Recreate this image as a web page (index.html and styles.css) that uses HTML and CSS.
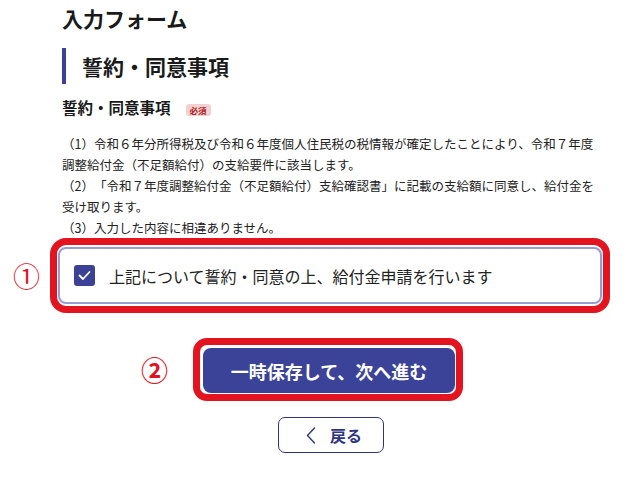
FILE: index.html
```html
<!DOCTYPE html>
<html lang="ja">
<head>
<meta charset="utf-8">
<title>入力フォーム</title>
<link rel="stylesheet" href="styles.css">
</head>
<body>
<div class="page">
  <h1 class="title">入力フォーム</h1>
  <h2 class="section">誓約・同意事項</h2>
  <div class="sub">
    <span class="sub-label">誓約・同意事項</span>
    <span class="badge">必須</span>
  </div>
  <div class="terms">
    <p>（1）令和６年分所得税及び令和６年度個人住民税の税情報が確定したことにより、令和７年度<br>調整給付金（不足額給付）の支給要件に該当します。</p>
    <p>（2）「令和７年度調整給付金（不足額給付）支給確認書」に記載の支給額に同意し、給付金を<br>受け取ります。</p>
    <p>（3）入力した内容に相違ありません。</p>
  </div>
  <div class="row row-check">
    <span class="marker marker-1">①</span>
    <div class="frame frame-check">
      <label class="check-box">
        <span class="check">
          <svg width="21" height="21" viewBox="0 0 21 21"><polyline points="5.5,10.5 9,14 15.5,7" fill="none" stroke="#fff" stroke-width="1.8" stroke-linecap="round" stroke-linejoin="round"/></svg>
        </span>
        <span class="check-text">上記について誓約・同意の上、給付金申請を行います</span>
      </label>
    </div>
  </div>
  <div class="row row-next">
    <span class="marker marker-2">②</span>
    <div class="frame frame-next">
      <button class="btn-next" type="button">一時保存して、次へ進む</button>
    </div>
  </div>
  <div class="row row-back">
    <button class="btn-back" type="button">
      <svg width="10" height="17" viewBox="0 0 10 17"><polyline points="8.5,1 1.5,8.5 8.5,16" fill="none" stroke="#2f3583" stroke-width="1.4" stroke-linecap="round" stroke-linejoin="round"/></svg>
      <span>戻る</span>
    </button>
  </div>
</div>
</body>
</html>
```
FILE: styles.css
```css
html, body {
  margin: 0;
  padding: 0;
  background: #ffffff;
}
body {
  font-family: "Noto Sans CJK JP", "Noto Sans", sans-serif;
  color: #1a1a1a;
  width: 640px;
  height: 478px;
  overflow: hidden;
  text-spacing-trim: space-all;
}
.page {
  padding-top: 4px;
}
.title {
  margin: 0 0 0 62px;
  font-size: 21px;
  line-height: 28px;
  font-weight: 700;
}
.section {
  margin: 16px 0 0 62px;
  border-left: 4px solid #3b4296;
  padding-left: 16px;
  font-size: 21px;
  line-height: 36px;
  font-weight: 700;
}
.sub {
  margin: 12px 0 0 62px;
  display: flex;
  align-items: flex-start;
  gap: 15px;
}
.sub-label {
  font-size: 15.5px;
  line-height: 22px;
  font-weight: 700;
}
.badge {
  margin-top: 8px;
  width: 25px;
  height: 12px;
  border-radius: 3px;
  background: #f5d0d0;
  color: #a8232a;
  font-size: 8.5px;
  line-height: 12px;
  text-align: center;
  font-weight: 700;
}
.terms {
  margin: 15px 0 0 62px;
  width: 560px;
  font-size: 12.5px;
  line-height: 21px;
  color: #222;
}
.terms p {
  margin: 0;
  white-space: nowrap;
}
.row {
  display: flex;
  align-items: center;
}
.marker {
  color: #e3141f;
  font-size: 27px;
  line-height: 30px;
}
.marker-1 {
  margin-left: 13px;
  margin-right: 10px;
}
.marker-2 {
  margin-left: 141px;
  margin-right: 25px;
  font-weight: 700;
}
.frame {
  border: 7px solid #e3141f;
  border-radius: 16px;
  padding: 2px;
  background: #fff;
}
.row-check {
  margin-top: 0;
}
.frame-check {
  width: 544px;
  padding: 2px 1px 2px 1px;
}
.check-box {
  display: flex;
  align-items: center;
  height: 53px;
  border: 2px solid #9a9dd1;
  border-radius: 8px;
  padding-left: 14px;
  gap: 14px;
  background: #fff;
}
.check {
  width: 21px;
  height: 21px;
  border-radius: 3px;
  background: #3a4196;
  display: flex;
}
.check-text {
  font-size: 16px;
  color: #222;
}
.row-next {
  margin-top: 25px;
}
.frame-next {
  border-radius: 14px;
  padding: 3px 1px 1px 3px;
}
.btn-next {
  display: block;
  width: 252px;
  height: 45px;
  border: none;
  border-radius: 8px;
  background: #3b4399;
  color: #fff;
  font-family: "Noto Sans CJK JP", "Noto Sans", sans-serif;
  font-size: 18px;
  font-weight: 700;
  padding: 0;
  text-spacing-trim: space-all;
}
.row-back {
  margin-top: 16px;
  padding-left: 278px;
}
.btn-back {
  width: 106px;
  height: 36px;
  box-sizing: border-box;
  border: 1.5px solid #2f3583;
  border-radius: 7px;
  background: #fff;
  display: flex;
  align-items: center;
  padding: 0 0 0 27px;
  gap: 14px;
  font-family: "Noto Sans CJK JP", "Noto Sans", sans-serif;
  font-size: 16px;
  font-weight: 700;
  color: #2f3583;
}
```
